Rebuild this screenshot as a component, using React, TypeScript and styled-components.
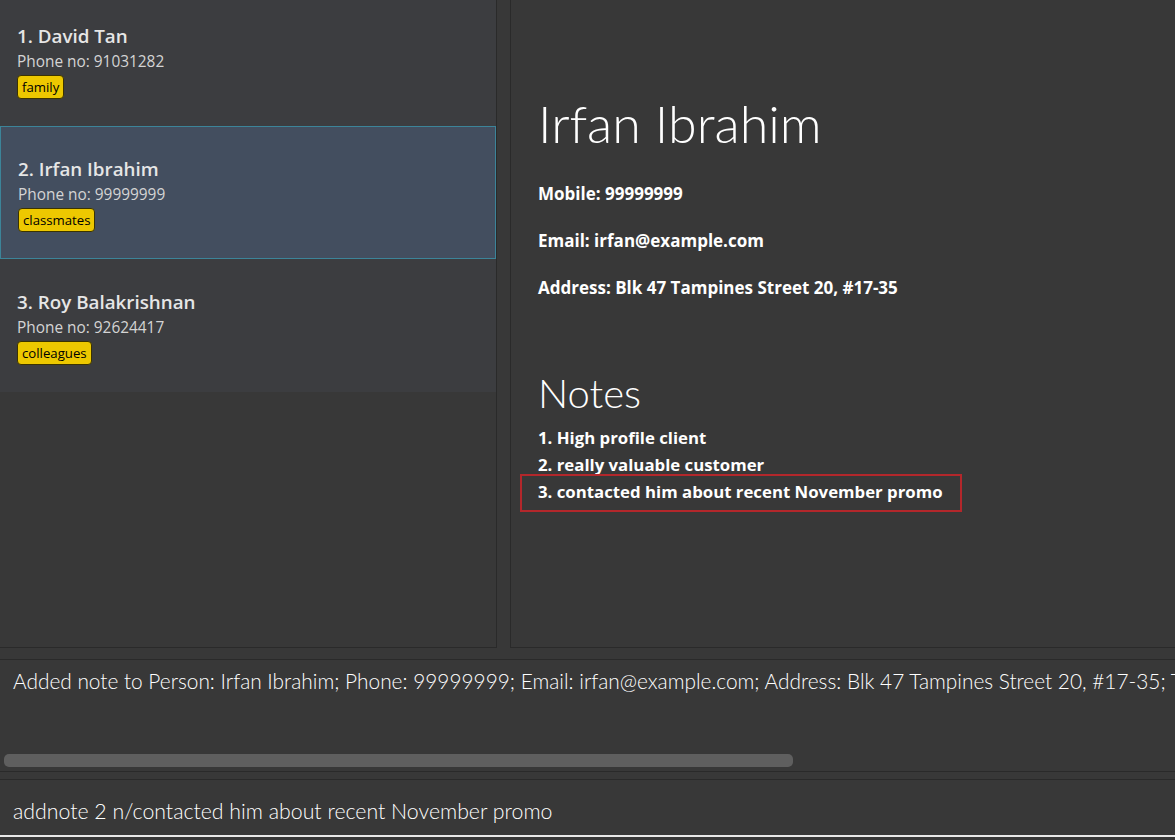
import React from "react";
import styled, { createGlobalStyle } from "styled-components";

const Global = createGlobalStyle`
  html, body { margin: 0; padding: 0; background: #383838; }
  body { font-family: "Open Sans", "Noto Sans", sans-serif; overflow: hidden; }
  * { box-sizing: border-box; }
`;

const Window = styled.div`
  width: 1175px;
  height: 840px;
  display: flex;
  flex-direction: column;
  background: #383838;
  overflow: hidden;
`;

const Main = styled.div`
  height: 648px;
  display: flex;
  gap: 13px;
`;

const ListPanel = styled.div`
  width: 497px;
  border-right: 1px solid #2a2a2a;
  border-bottom: 1px solid #2a2a2a;
  overflow: hidden;
  background: #383838;
`;

const ListInner = styled.div`
  margin-top: -7px;
  display: flex;
  flex-direction: column;
`;

const Cell = styled.div<{ $selected?: boolean }>`
  height: 133px;
  display: flex;
  flex-direction: column;
  justify-content: center;
  gap: 3px;
  padding: 3px 0 0 17px;
  background: ${(p) => (p.$selected ? "#434e5f" : "#3c3d40")};
  border: 1px solid ${(p) => (p.$selected ? "#3c8499" : "transparent")};
  border-left-width: ${(p) => (p.$selected ? "1px" : "0")};
`;

const Name = styled.div`
  font-size: 18.8px;
  font-weight: 600;
  color: #e6e6e6;
  line-height: 24px;
`;

const Phone = styled.div`
  font-size: 15.4px;
  color: #d4d4d4;
  line-height: 21px;
`;

const Tag = styled.span`
  align-self: flex-start;
  background: #edc800;
  color: #000;
  font-size: 13.2px;
  line-height: 22px;
  padding: 0 4px;
  border: 1px solid #3b3300;
  border-radius: 4px;
`;

const DetailPanel = styled.div`
  flex: 1;
  border-left: 1px solid #2a2a2a;
  border-bottom: 1px solid #2a2a2a;
  padding: 88px 0 0 27px;
  color: #fff;
`;

const BigName = styled.div`
  font-family: "Lato", "Open Sans", sans-serif;
  font-size: 52px;
  font-weight: 300;
  line-height: 70px;
  margin-bottom: 25px;
`;

const Field = styled.div`
  font-size: 17px;
  font-weight: 700;
  line-height: 22px;
  margin-bottom: 25px;
`;

const NotesTitle = styled.div`
  font-family: "Lato", "Open Sans", sans-serif;
  font-size: 40px;
  font-weight: 300;
  line-height: 50px;
  margin-top: 69px;
`;

const NoteList = styled.div`
  display: flex;
  flex-direction: column;
  margin: 6px 0 0 -18px;
`;

const Note = styled.div<{ $highlight?: boolean }>`
  font-size: 16.8px;
  font-weight: 700;
  line-height: 27px;
  padding: 0 18px;
  align-self: flex-start;
  ${(p) =>
    p.$highlight
      ? `
    width: 442px;
    margin-top: -4px;
    padding: 2px 16px 5px;
    border: 2px solid #b3272b;
  `
      : ""}
`;

const ResultBox = styled.div`
  margin-top: 11px;
  height: 113px;
  border-top: 1px solid #2a2a2a;
  border-bottom: 1px solid #2a2a2a;
  display: flex;
  flex-direction: column;
  justify-content: space-between;
  overflow: hidden;
`;

const ResultText = styled.div`
  padding: 8px 0 0 13px;
  font-family: "Lato", "Open Sans", sans-serif;
  font-size: 20.85px;
  font-weight: 300;
  color: #fff;
  white-space: nowrap;
`;

const ScrollTrack = styled.div`
  padding: 0 0 4px 4px;
`;

const ScrollThumb = styled.div`
  width: 789px;
  height: 13px;
  border-radius: 5px;
  background: #5f5f5f;
`;

const CommandBox = styled.div`
  margin-top: 7px;
  flex: 1;
  border-top: 1px solid #2a2a2a;
  display: flex;
  flex-direction: column;
`;

const CommandText = styled.div`
  flex: 1;
  display: flex;
  align-items: center;
  padding: 7px 0 0 13px;
  font-family: "Lato", "Open Sans", sans-serif;
  font-size: 21.3px;
  font-weight: 300;
  color: #fff;
  border-bottom: 2px solid #e8e8e8;
  margin-bottom: 3px;
`;

const persons = [
  { name: "1. David Tan", phone: "91031282", tag: "family" },
  { name: "2. Irfan Ibrahim", phone: "99999999", tag: "classmates", selected: true },
  { name: "3. Roy Balakrishnan", phone: "92624417", tag: "colleagues" },
];

export default function App() {
  return (
    <>
      <Global />
      <Window>
        <Main>
          <ListPanel>
            <ListInner>
              {persons.map((p) => (
                <Cell key={p.name} $selected={p.selected}>
                  <Name>{p.name}</Name>
                  <Phone>Phone no: {p.phone}</Phone>
                  <Tag>{p.tag}</Tag>
                </Cell>
              ))}
            </ListInner>
          </ListPanel>
          <DetailPanel>
            <BigName>Irfan Ibrahim</BigName>
            <Field>Mobile: 99999999</Field>
            <Field>Email: irfan@example.com</Field>
            <Field>Address: Blk 47 Tampines Street 20, #17-35</Field>
            <NotesTitle>Notes</NotesTitle>
            <NoteList>
              <Note>1. High profile client</Note>
              <Note>2. really valuable customer</Note>
              <Note $highlight>3. contacted him about recent November promo</Note>
            </NoteList>
          </DetailPanel>
        </Main>
        <ResultBox>
          <ResultText>
            Added note to Person: Irfan Ibrahim; Phone: 99999999; Email: irfan@example.com; Address: Blk 47 Tampines Street 20, #17-35; Tags: [classmates]
          </ResultText>
          <ScrollTrack>
            <ScrollThumb />
          </ScrollTrack>
        </ResultBox>
        <CommandBox>
          <CommandText>addnote 2 n/contacted him about recent November promo</CommandText>
        </CommandBox>
      </Window>
    </>
  );
}
